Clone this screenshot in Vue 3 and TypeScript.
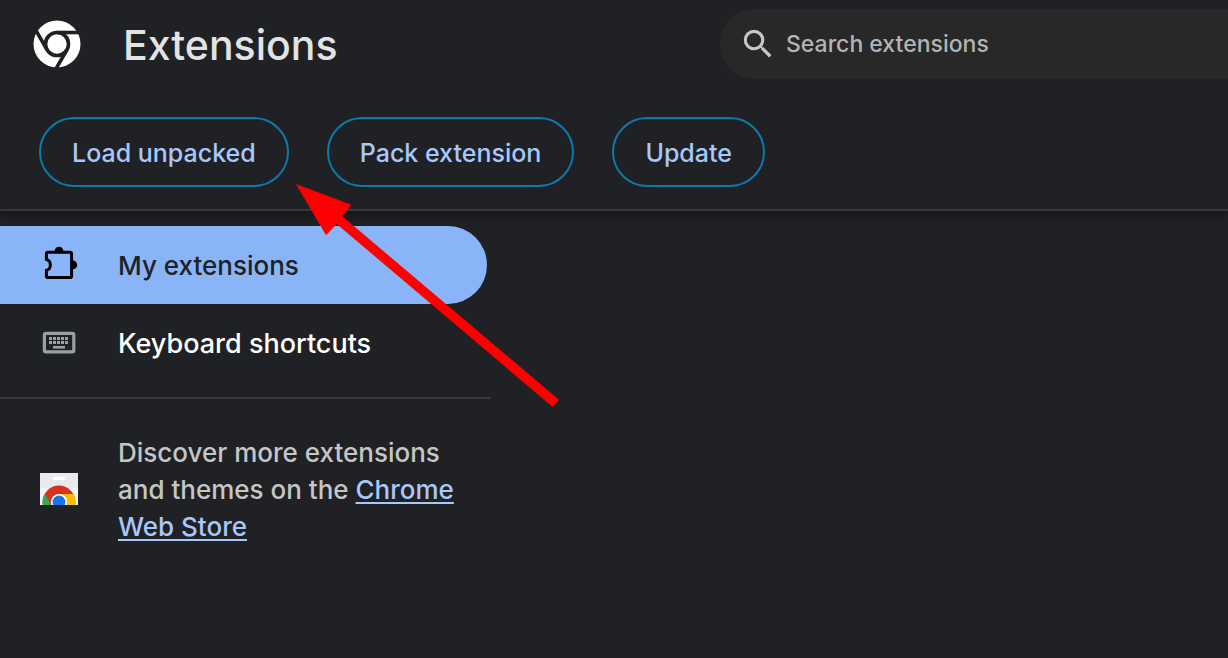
<script setup lang="ts">
import { ref } from 'vue'

const query = ref('')
const actions: string[] = ['Load unpacked', 'Pack extension', 'Update']
const keyColumns: number[] = [9, 13, 17, 21, 25]
</script>

<template>
  <div class="page">
    <header class="toolbar">
      <div class="title-row">
        <div class="brand">
          <svg class="logo" viewBox="-24 -24 48 48" aria-hidden="true">
            <circle r="23.5" fill="#fff" />
            <circle r="11.5" fill="none" stroke="#202124" stroke-width="3.6" />
            <g stroke="#202124" stroke-width="3.6">
              <path d="M0-11.5H24" />
              <path d="M0-11.5H24" transform="rotate(120)" />
              <path d="M0-11.5H24" transform="rotate(240)" />
            </g>
          </svg>
          <h1>Extensions</h1>
        </div>
        <label class="search">
          <svg class="search-icon" viewBox="0 0 24 24" aria-hidden="true">
            <path
              fill="#c7c7c7"
              d="M15.5 14h-.79l-.28-.27A6.471 6.471 0 0 0 16 9.5 6.5 6.5 0 1 0 9.5 16c1.61 0 3.09-.59 4.23-1.57l.27.28v.79l5 4.99L20.49 19l-4.99-5zm-6 0C7.01 14 5 11.99 5 9.5S7.01 5 9.5 5 14 7.01 14 9.5 11.99 14 9.5 14z"
            />
          </svg>
          <input v-model="query" type="search" placeholder="Search extensions" aria-label="Search extensions" />
        </label>
      </div>
      <div class="actions">
        <button v-for="action in actions" :key="action" type="button">{{ action }}</button>
      </div>
    </header>

    <aside class="sidebar">
      <nav>
        <a class="item selected" href="#extensions" aria-current="page">
          <svg class="icon" viewBox="0 0 38 38" aria-hidden="true">
            <path
              d="M8 6.2H30Q31.6 6.2 31.6 7.8V30Q31.6 31.6 30 31.6H8Q6.4 31.6 6.4 30V24.4C8.8 23.6 10.4 21.4 10.4 18.9C10.4 16.4 8.8 14.2 6.4 13.4V7.8Q6.4 6.2 8 6.2Z"
              fill="none"
              stroke="#000"
              stroke-width="3"
            />
            <path d="M14.6 5.2A4.4 4.4 0 0 1 23.4 5.2ZM32.8 14.5A4.4 4.4 0 0 1 32.8 23.3Z" />
          </svg>
          <span>My extensions</span>
        </a>
        <a class="item" href="#shortcuts">
          <svg class="icon" viewBox="0 0 38 38" aria-hidden="true">
            <rect x="4.4" y="9.4" width="29.4" height="18.4" rx="1.6" fill="none" stroke="#9aa0a6" stroke-width="3.2" />
            <g fill="#9aa0a6">
              <rect v-for="x in keyColumns" :key="'a' + x" :x="x" y="13" width="3" height="3" />
              <rect v-for="x in keyColumns" :key="'b' + x" :x="x" y="17" width="3" height="3" />
              <rect x="13" y="22" width="12" height="2.6" />
            </g>
          </svg>
          <span>Keyboard shortcuts</span>
        </a>
      </nav>
      <div class="promo">
        <svg class="icon" viewBox="0 1 38 38" aria-hidden="true">
          <defs>
            <clipPath id="bag"><path d="M0 3H38V35H0Z" /></clipPath>
            <clipPath id="disc"><circle cx="19" cy="32" r="16.4" /></clipPath>
          </defs>
          <g clip-path="url(#bag)">
            <path d="M0 3H38V35H0Z" fill="#f1f3f4" />
            <path d="M0 3H38V18H0Z" fill="#e8eaed" />
            <rect x="12.7" y="6.7" width="12.4" height="3.4" rx="1.7" fill="#fff" />
            <g clip-path="url(#disc)">
              <path d="M0 12H38V38H0Z" fill="#d93025" />
              <path d="M19 24H38V38H19Z" fill="#fbbc04" />
              <path d="M4.8 23.5L13 38H0V23.5Z" fill="#34a853" />
            </g>
            <circle cx="19" cy="32" r="8" fill="#fff" />
            <circle cx="19" cy="32" r="6.4" fill="#1a73e8" />
          </g>
        </svg>
        <p>Discover more extensions and themes on the <a href="#store">Chrome Web Store</a></p>
      </div>
    </aside>

    <svg class="pointer" viewBox="0 0 264 224" aria-hidden="true">
      <path fill="#f00" d="M0 0L55.3 20.7L46.3 32.3L263 215.7L256.7 223L40.7 40L30 51.3Z" />
    </svg>
  </div>
</template>

<style>
body {
  margin: 0;
  background: #202124;
}
</style>

<style scoped>
.page {
  position: relative;
  min-height: 100vh;
  overflow: hidden;
  background: #202124;
  color: #e3e3e3;
  font-family: Inter, 'Liberation Sans', sans-serif;
  font-size: 26px;
}

.toolbar {
  padding-top: 9px;
  border-bottom: 2px solid #37383b;
  box-shadow: 0 2px 10px rgba(0, 0, 0, 0.5);
}

.title-row {
  display: flex;
  align-items: center;
}

.brand {
  display: flex;
  flex: 0 0 720px;
  align-items: center;
  gap: 42px;
  box-sizing: border-box;
  padding-left: 33px;
}

.logo {
  width: 48px;
  height: 48px;
}

h1 {
  margin: 0;
  padding-top: 2px;
  font-size: 41px;
  font-weight: 500;
  line-height: 52px;
}

.search {
  display: flex;
  flex: 1;
  align-items: center;
  gap: 9px;
  box-sizing: border-box;
  min-width: 0;
  height: 70px;
  padding-left: 19px;
  border-radius: 35px 0 0 35px;
  background: #282828;
}

.search-icon {
  flex: none;
  width: 38px;
  height: 38px;
}

input {
  flex: 1;
  min-width: 0;
  padding: 0;
  border: 0;
  outline: 0;
  background: transparent;
  color: #e3e3e3;
  font: 500 23px/32px Inter, 'Liberation Sans', sans-serif;
}

input::placeholder {
  color: #b4b4b4;
  opacity: 1;
}

.actions {
  display: flex;
  gap: 38px;
  padding: 38px 39px 22px;
}

button {
  height: 70px;
  padding: 2px 31px 0;
  border: 2px solid #0f78ad;
  border-radius: 35px;
  background: transparent;
  color: #a8c7fa;
  font: 500 25px/32px Inter, 'Liberation Sans', sans-serif;
}

.sidebar {
  width: 491px;
  padding-top: 15px;
}

nav {
  padding: 0 4px 15px 0;
  border-bottom: 2px solid #37383b;
}

.item {
  display: flex;
  align-items: center;
  gap: 40px;
  height: 78px;
  padding-left: 40px;
  border-radius: 0 39px 39px 0;
  color: #fff;
  font-size: 27px;
  font-weight: 500;
  text-decoration: none;
}

.selected {
  background: #8ab4f8;
  color: #202124;
  font-size: 26px;
}

.icon {
  flex: none;
  width: 38px;
  height: 38px;
}

.promo {
  display: flex;
  align-items: center;
  gap: 40px;
  padding: 35px 20px 35px 40px;
}

p {
  margin: 0;
  color: #c4c7c5;
  font-weight: 500;
  line-height: 37px;
}

p a {
  color: #a8c7fa;
  text-decoration-thickness: 2px;
  text-underline-offset: 3px;
}

.pointer {
  position: absolute;
  top: 184px;
  left: 296px;
  width: 264px;
  height: 224px;
  pointer-events: none;
}
</style>
